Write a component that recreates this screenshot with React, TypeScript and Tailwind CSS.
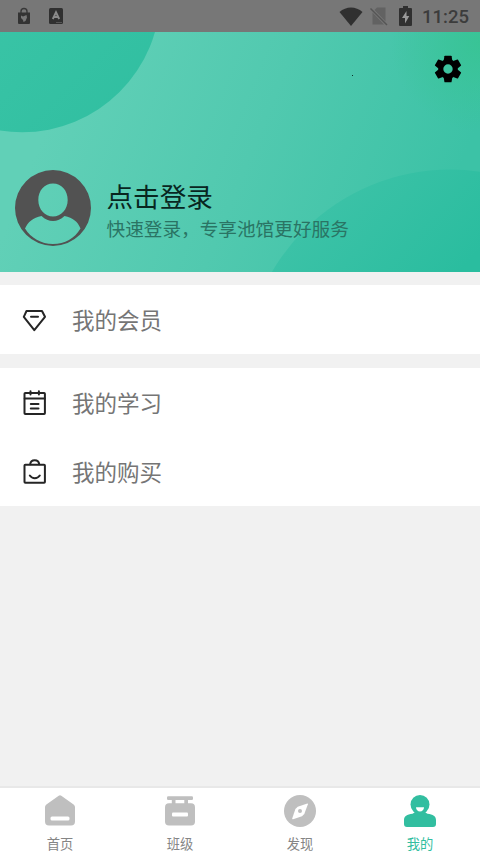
import type { ReactNode } from "react";
import clsx from "clsx";

const StatusBar = () => (
  <div className="h-8 bg-[#777777] flex flex-row items-center justify-between pl-[17px] pr-[11px] text-[#303030]">
    <div className="flex flex-row items-center">
      <svg className="w-[14px] h-[18px]" viewBox="0 0 14 18">
        <path d="M4 6V4.500a3 3 0 0 1 6 0V6" fill="none" stroke="#383838" strokeWidth="1.400" />
        <path d="M1 5.500h12V16a1 1 0 0 1-1 1H2a1 1 0 0 1-1-1z" fill="#333333" />
        <path d="M4 8.500l2 1 3.500-1.500.5 2.500-1.500 3.500-2 1L6 13l-2-2z" fill="#777777" />
      </svg>
      <svg className="w-[14px] h-4 ml-[18px]" viewBox="0 0 14 16">
        <rect width="14" height="16" rx="1.500" fill="#303030" />
        <path d="M3.800 11L7 4.300 10.200 11M5 9h4" fill="none" stroke="#8a8a8a" strokeWidth="1.900" />
        <path d="M7 14.500h6" stroke="#555555" />
      </svg>
    </div>
    <div className="flex flex-row items-center">
      <svg className="w-6 h-[19px]" viewBox="0 0 24 19">
        <path d="M0.500 5C7-1 17-1 23.500 5L12 19z" fill="#303030" />
      </svg>
      <svg className="w-[18px] h-[19px] ml-[7px]" viewBox="0 0 18 19">
        <path d="M7 0.500h8.500V14.500L4.500 3zM2.500 5.500L14 17.500H2.500z" fill="#626262" />
        <path d="M0.500 1.500L17 18" stroke="#555555" strokeWidth="1.500" />
      </svg>
      <svg className="w-[13px] h-5 ml-[11px]" viewBox="0 0 13 20">
        <path d="M4 0h5v2h3a1 1 0 0 1 1 1v16a1 1 0 0 1-1 1H1a1 1 0 0 1-1-1V3a1 1 0 0 1 1-1h3z" fill="#303030" />
        <path d="M7.500 5L3 12h3v5.500L10.300 10H7.500z" fill="#999999" />
      </svg>
      <span className="ml-[10px] pt-px font-['Roboto',sans-serif] font-medium text-[18.500px] leading-8 text-[#3c3c3c]">
        11:25
      </span>
    </div>
  </div>
);

const HeaderShapes = () => (
  <svg className="absolute inset-0 w-full h-full" viewBox="0 0 480 240">
    <defs>
      <linearGradient id="base" gradientUnits="userSpaceOnUse" x1="60" y1="60" x2="430" y2="210">
        <stop offset="0" stopColor="#61d0b7" />
        <stop offset="0.500" stopColor="#51c9af" />
        <stop offset="1" stopColor="#3cc2a6" />
      </linearGradient>
      <linearGradient id="left" x1="0" y1="0" x2="1" y2="1">
        <stop offset="0.300" stopColor="#3dc6a8" />
        <stop offset="1" stopColor="#2fbea0" />
      </linearGradient>
      <linearGradient id="right" gradientUnits="userSpaceOnUse" x1="350" y1="140" x2="460" y2="240">
        <stop offset="0" stopColor="#3cc2a7" />
        <stop offset="1" stopColor="#2abd9f" />
      </linearGradient>
      <radialGradient id="corner" gradientUnits="userSpaceOnUse" cx="480" cy="10" r="90">
        <stop offset="0" stopColor="#37c491" stopOpacity="0.800" />
        <stop offset="1" stopColor="#37c491" stopOpacity="0" />
      </radialGradient>
    </defs>
    <rect width="480" height="240" fill="url(#base)" />
    <rect width="480" height="240" fill="url(#corner)" />
    <circle cx="22" cy="-38" r="138.300" fill="url(#left)" />
    <circle cx="450" cy="343.500" r="206" fill="url(#right)" />
    <rect x="352" y="43" width="1" height="1" fill="#0b3028" />
  </svg>
);

const GearIcon = () => (
  <svg className="w-8 h-8" viewBox="-16 -16 32 32">
    <circle r="7.300" fill="none" stroke="#000000" strokeWidth="5.200" />
    {[0, 60, 120, 180, 240, 300].map((angle) => (
      <path
        key={angle}
        transform={`rotate(${angle})`}
        d="M-3-13.300h6q.5 0 .6.500l.7 4.300h-8.600l.7-4.300q.1-.5.600-.5z"
        fill="#000000"
      />
    ))}
  </svg>
);

const Avatar = () => (
  <svg className="w-[76px] h-[76px]" viewBox="0 0 76 76">
    <path
      fillRule="evenodd"
      fill="#525252"
      d="M38 0a38 38 0 1 0 0 76a38 38 0 1 0 0-76zM38 13.500c8.500 0 14.700 7 14.700 16.500S46 46.500 38 46.500 23.300 39.500 23.300 30 29.500 13.500 38 13.500zM26.500 46C30 49.500 34 51 38 51s8-1.500 11.500-5c8.500 1.500 13.500 6 16 12.500C59.500 68.500 50 74 38 74S16 68 10 58.500C13 52 18 47.500 26.500 46z"
    />
  </svg>
);

const DiamondIcon = () => (
  <svg className="w-[26px] h-[26px]" viewBox="0 0 26 26" fill="none" stroke="#252525" strokeWidth="2" strokeLinejoin="round" strokeLinecap="round">
    <path d="M5.500 4h15.500l3 5.800L13.300 23.200 2.800 9.800z" />
    <path d="M10 9.700h7" />
  </svg>
);

const NotebookIcon = () => (
  <svg className="w-[26px] h-[26px]" viewBox="0 0 26 26" fill="none" stroke="#252525" strokeWidth="2" strokeLinejoin="round" strokeLinecap="round">
    <rect x="3.500" y="3" width="20.400" height="21" rx="0.800" />
    <path d="M3.700 8.500h20M9.500 1.200v3.200M17.900 1.200v3.200" />
    <path d="M9.800 13.900h7.700M9.800 18.400h7.700" />
  </svg>
);

const BagIcon = () => (
  <svg className="w-[26px] h-[26px]" viewBox="0 0 26 26" fill="none" stroke="#252525" strokeWidth="2" strokeLinejoin="round" strokeLinecap="round">
    <rect x="3.500" y="5.700" width="20.400" height="18" rx="0.800" />
    <path d="M9.200 5.200c.6-5.200 8.400-5.200 9 0" />
    <path d="M8.800 16.500c2.500 3.600 7.500 3.600 10 0" />
  </svg>
);

const HomeIcon = () => (
  <svg className="w-8 h-8" viewBox="0 0 32 32">
    <path d="M14.700.7a2.200 2.200 0 0 1 2.600 0l12.300 8.700q1.400 1 1.400 2.600v14.500a4 4 0 0 1-4 4H5a4 4 0 0 1-4-4V12q0-1.600 1.400-2.600z" fill="#bfbfbf" />
    <rect x="6.500" y="21.500" width="19" height="4" rx="1.500" fill="#ffffff" />
  </svg>
);

const ClassIcon = () => (
  <svg className="w-8 h-8" viewBox="0 0 32 32" fill="#bfbfbf">
    <rect x="3" y="1.300" width="26" height="3.700" rx="1.200" />
    <path d="M7.800 4h3.700v6H7.800zM20.300 4H24v6h-3.700z" />
    <rect x="1" y="8.300" width="30" height="22.200" rx="4" />
    <rect x="8" y="17.500" width="16" height="4" rx="1" fill="#ffffff" />
  </svg>
);

const CompassIcon = () => (
  <svg className="w-8 h-8" viewBox="0 0 32 32">
    <circle cx="16" cy="16" r="16" fill="#bfbfbf" />
    <path d="M23.400 8.500q.7-.1.500.7l-3.600 9.800-2.300 2.300-8.900 3q-1.100.2-.9-.8l3.200-9.500 2.300-2.300z" fill="#ffffff" />
    <circle cx="16" cy="16" r="2" fill="#bfbfbf" />
  </svg>
);

const MineIcon = () => (
  <svg className="w-8 h-8" viewBox="0 0 32 32">
    <circle cx="16" cy="9.500" r="9.500" fill="#32bea0" />
    <path d="M11 16h10q.3 2.300 2.500 2.700c5.500.8 8.500 2.300 8.500 6.300v4a3 3 0 0 1-3 3H3a3 3 0 0 1-3-3v-4c0-4 3-5.500 8.500-6.300q2.200-.4 2.500-2.700z" fill="#32bea0" />
    <path d="M12 12.300h8c0 2.600-1.800 4.200-4 4.200s-4-1.600-4-4.200z" fill="#ffffff" />
  </svg>
);

const MenuRow = ({ icon, label }: { icon: ReactNode; label: string }) => (
  <div className="h-[69px] flex flex-row items-center pl-[21px] cursor-pointer">
    {icon}
    <p className="ml-[25px] pb-[2px] text-[22.500px] leading-8 text-[#757575]">{label}</p>
  </div>
);

const tabs = [
  { key: "home", label: "首页", icon: <HomeIcon /> },
  { key: "class", label: "班级", icon: <ClassIcon /> },
  { key: "discover", label: "发现", icon: <CompassIcon /> },
  { key: "mine", label: "我的", icon: <MineIcon /> },
];

const App = () => {
  const activeTab = "mine";

  return (
    <div className="w-full h-[853px] flex flex-col bg-[#f1f1f1] overflow-hidden font-['Noto_Sans_CJK_SC',sans-serif]">
      <StatusBar />
      <div className="relative h-60">
        <HeaderShapes />
        <div className="relative h-full flex flex-col">
          <div className="flex justify-end pt-[21px] pr-4">
            <GearIcon />
          </div>
          <div className="flex flex-row items-center mt-[85px] pl-[15px]">
            <Avatar />
            <div className="ml-[15.500px] pt-[3px]">
              <p className="text-[26.600px] leading-9 text-[#08261f]">点击登录</p>
              <p className="text-[18.650px] leading-7 text-[#2a7464]">快速登录，专享池馆更好服务</p>
            </div>
          </div>
        </div>
      </div>

      <div className="mt-[13px] bg-white">
        <MenuRow icon={<DiamondIcon />} label="我的会员" />
      </div>
      <div className="mt-[14px] bg-white">
        <MenuRow icon={<NotebookIcon />} label="我的学习" />
        <MenuRow icon={<BagIcon />} label="我的购买" />
      </div>

      <div className="mt-auto h-[67px] bg-white border-t-2 border-[#e8e8e8] flex flex-row">
        {tabs.map((tab) => (
          <div key={tab.key} className="flex-1 flex flex-col items-center pt-[7px]">
            <div className="shrink-0">{tab.icon}</div>
            <p
              className={clsx(
                "mt-[7px] h-[17px] text-[13.300px] leading-5",
                tab.key === activeTab ? "text-[#32bea0]" : "text-[#858585]"
              )}
            >
              {tab.label}
            </p>
          </div>
        ))}
      </div>
    </div>
  );
};

export default App;
